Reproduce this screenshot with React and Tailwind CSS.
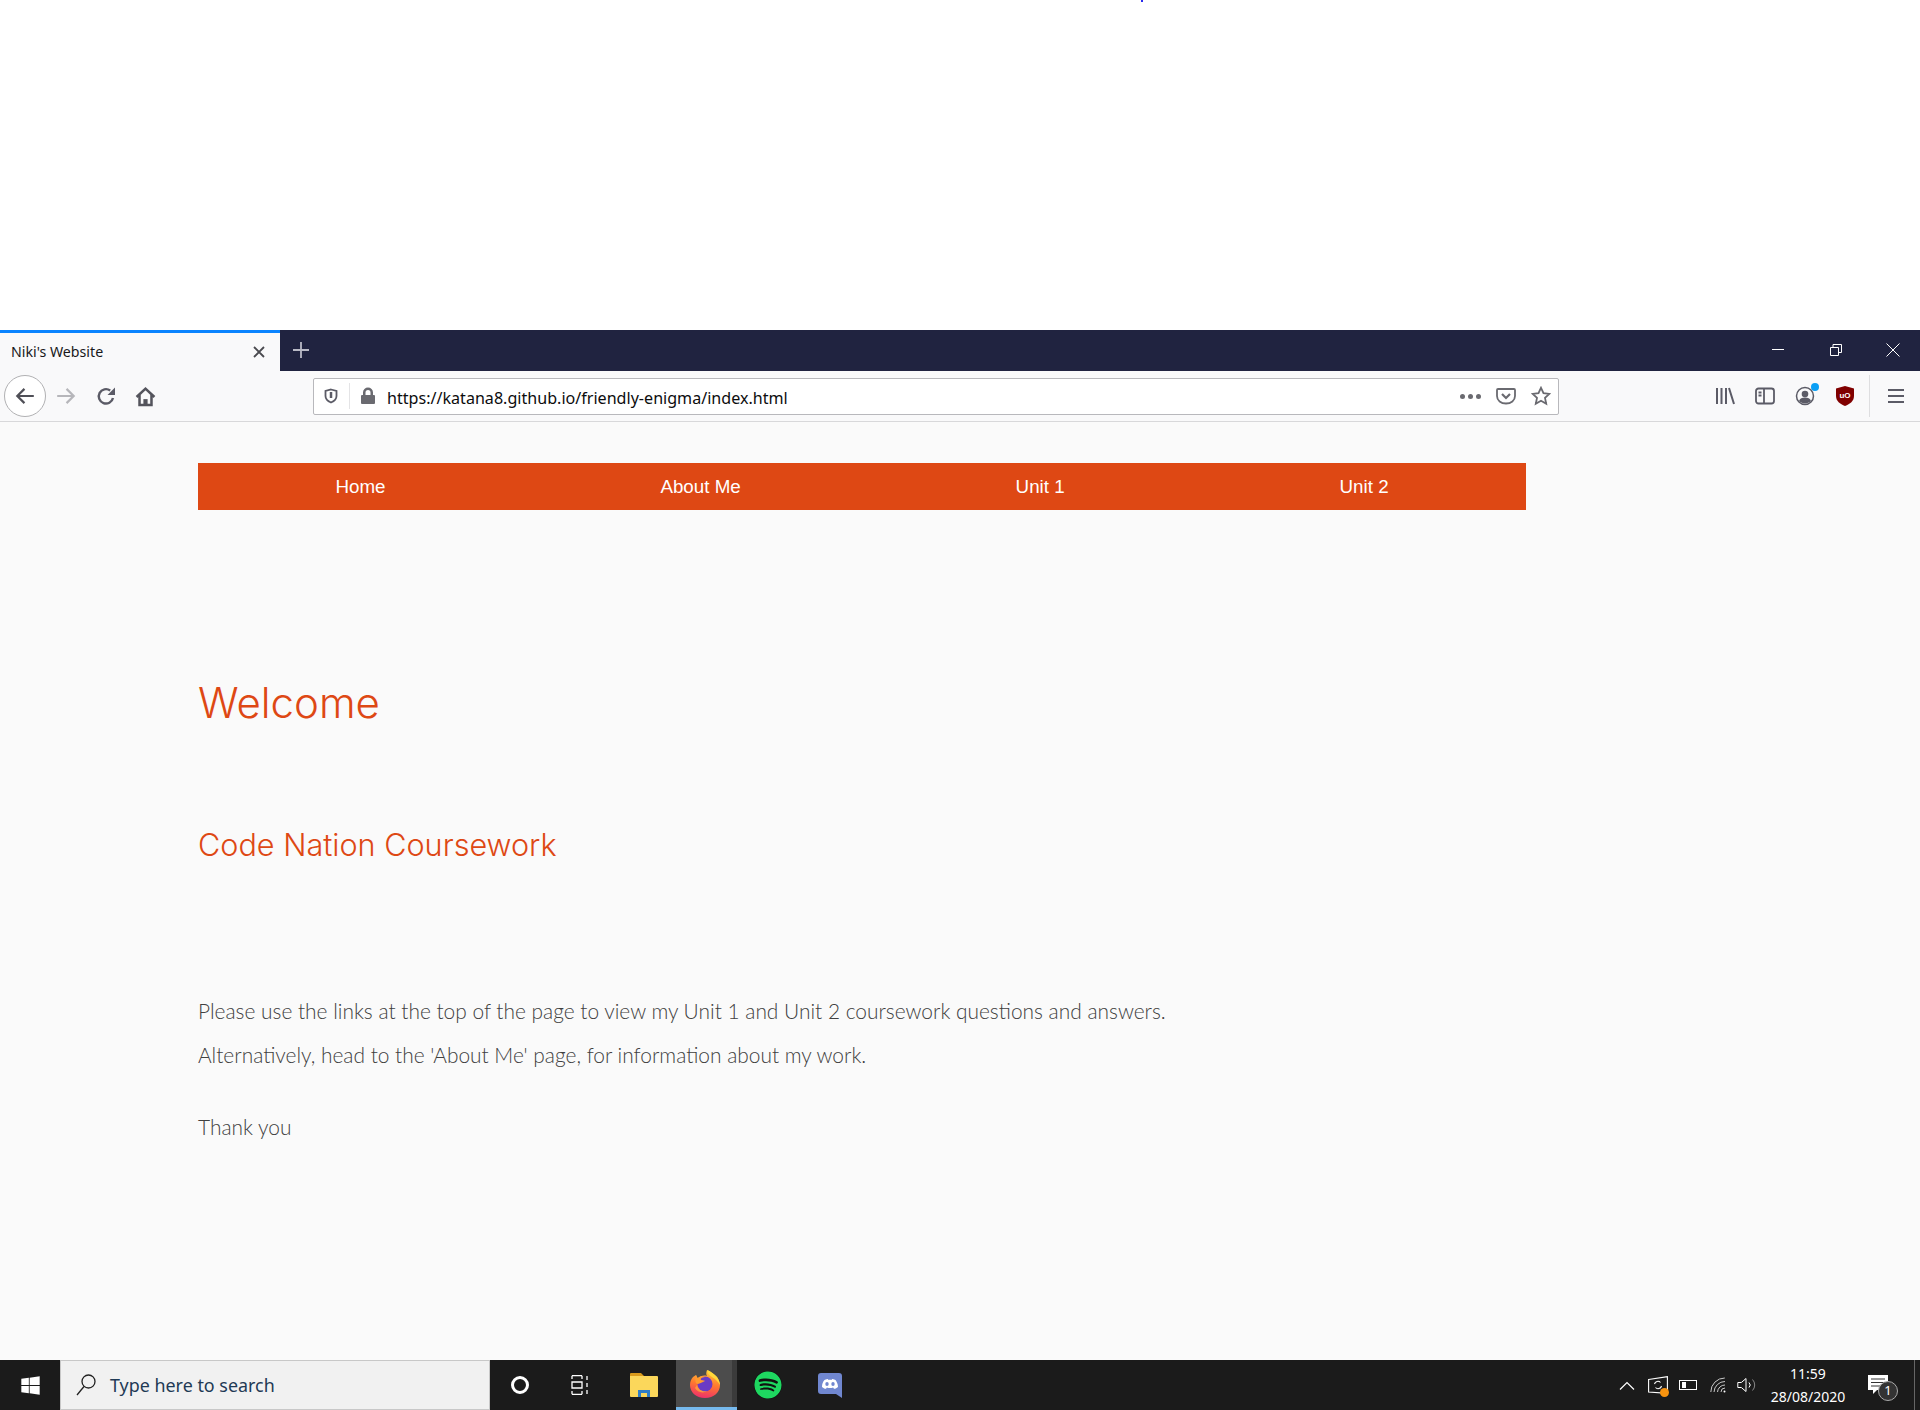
import { FaSpotify, FaWindows } from 'react-icons/fa'

const sans = "font-['Liberation_Sans',Arial,sans-serif]"

/* browser chrome glyphs, all on a 16 or 20 box */
function Glyph({ size = 16, box = 16, color = '#5b5b66', children, className = '' }) {
  return (
    <svg width={size} height={size} viewBox={`0 0 ${box} ${box}`} fill="none" stroke={color} strokeWidth="1.8" className={className}>
      {children}
    </svg>
  )
}

function Slot({ w, children }) {
  return <div className="flex h-full shrink-0 items-center justify-center" style={{ width: w }}>{children}</div>
}

function TabStrip() {
  return (
    <div className="flex h-[41px] bg-[#202340]">
      <div className="flex w-[280px] items-center border-t-[3px] border-[#0a84ff] bg-[#f9f9fa] pb-[1px] pl-[11px] pr-[14px]">
        <span className="flex-1 text-[14.2px] text-[#18181a] font-['Noto_Sans',sans-serif]">Niki's Website</span>
        <Glyph size={14} box={14} color="#4a4a4f"><path d="M2 2l10 10M12 2L2 12" /></Glyph>
      </div>
      <div className="flex w-[42px] items-center justify-center pb-[2px]">
        <Glyph size={18} box={18} color="#b9bac6"><path d="M9 1v16M1 9h16" /></Glyph>
      </div>
      <div className="flex-1" />
      <div className="flex w-[58px] items-center justify-center pb-[2px]"><div className="h-px w-3 bg-white" /></div>
      <div className="flex w-[58px] items-center justify-center pb-[2px]">
        <svg width="12" height="12" viewBox="0 0 12 12" fill="none" stroke="#fff"><path d="M.5 3.500h8v8h-8zM3 3.500v-3h8.500v8h-3" /></svg>
      </div>
      <div className="flex w-[55px] items-center justify-center pb-[2px]">
        <svg width="14" height="14" viewBox="0 0 14 14" fill="none" stroke="#fff"><path d="M.5.5l13 13M13.500.5l-13 13" /></svg>
      </div>
    </div>
  )
}

function UrlBar() {
  return (
    <div className="ml-[147px] flex h-[37px] w-[1246px] shrink-0 items-center rounded-[2px] border border-[#b8b8bc] bg-white">
      <div className="flex w-[33px] justify-center">
        <Glyph size={16} box={16} color="#5b5b66"><path d="M8 1.500l5.500 1.500v5c0 3-2.500 5.200-5.500 6.500C5 13.200 2.500 11 2.500 8V3z" /><path d="M8 4v6" strokeWidth="2.500" /></Glyph>
      </div>
      <div className="ml-[2px] h-[26px] w-px bg-[#e4e4e6]" />
      <div className="flex w-[35px] justify-center">
        <svg width="16" height="18" viewBox="0 0 16 18" fill="#6a6a70"><path d="M3 8V5.500a5 5 0 0110 0V8h1a1 1 0 011 1v7a1 1 0 01-1 1H2a1 1 0 01-1-1V9a1 1 0 011-1zm2.500 0h5V5.500a2.500 2.500 0 00-5 0z" /></svg>
      </div>
      <span className="ml-[2px] flex-1 pt-[4px] text-[16.1px] text-[#0c0c0d] font-['Noto_Sans',sans-serif]">https://katana8.github.io/friendly-enigma/index.html</span>
      <div className="flex gap-[3px]">
        <div className="size-[5px] rounded-full bg-[#6a6a70]" />
        <div className="size-[5px] rounded-full bg-[#6a6a70]" />
        <div className="size-[5px] rounded-full bg-[#6a6a70]" />
      </div>
      <div className="ml-[15px] flex w-[20px] justify-center">
        <Glyph size={20} box={20} color="#6a6a70"><path d="M2 3h16a1 1 0 011 1v6c0 4.500-4 7.500-9 7.500S1 14.500 1 10V4a1 1 0 011-1z" /><path d="M6 8l4 4 4-4" strokeWidth="2.200" /></Glyph>
      </div>
      <div className="ml-[15px] mr-[7px] flex w-[20px] justify-center">
        <Glyph size={20} box={20} color="#6a6a70"><path d="M10 1.800l2.500 5.400 5.800.7-4.300 4 1.200 5.800L10 14.800l-5.200 2.900L6 11.900l-4.300-4 5.800-.7z" /></Glyph>
      </div>
    </div>
  )
}

function Toolbar() {
  return (
    <div className="flex h-[51px] items-center border-b border-[#d8d8da] bg-[#f9f9fa]">
      <div className="ml-[4px] flex size-[42px] shrink-0 items-center justify-center rounded-full border border-[#b1b1b3] bg-white">
        <Glyph size={22} box={20} color="#4f4f57" ><path d="M18 10H3M9.500 3.500L3 10l6.500 6.500" strokeWidth="2" /></Glyph>
      </div>
      <Slot w={40}>
        <Glyph size={22} box={20} color="#b6b6ba"><path d="M2 10h15M10.500 3.500L17 10l-6.500 6.500" strokeWidth="2" /></Glyph>
      </Slot>
      <Slot w={40}>
        <Glyph size={20} box={20} color="#5b5b66"><path d="M17 12a7.200 7.200 0 11-2.800-7.500" strokeWidth="2.400" /><path d="M19 1.500V9h-7.500z" fill="#5b5b66" stroke="none" /></Glyph>
      </Slot>
      <Slot w={39}>
        <Glyph size={21} box={20} color="#54545c"><path d="M1.500 10.500L10 2.500l8.500 8M4.300 8.500V18h11.400V8.500" strokeWidth="2.400" /><path d="M8 18v-5.500h4V18z" fill="#54545c" stroke="none" /></Glyph>
      </Slot>
      <div className="w-px shrink-0" />
      <UrlBar />
      <div className="ml-[146px] flex h-full items-center">
        <Slot w={40}>
          <Glyph size={20} box={20} color="#5b5b66"><path d="M2 2v16M6.500 2v16M11 2v16M14 2l5 16" strokeWidth="2" /></Glyph>
        </Slot>
        <Slot w={40}>
          <Glyph size={20} box={20} color="#5b5b66"><rect x="1" y="2.500" width="18" height="15" rx="2.500" /><path d="M9 2.500v15M3.500 6.500h3M3.500 9.500h3" /></Glyph>
        </Slot>
        <Slot w={40}>
          <div className="relative">
            <Glyph size={20} box={20} color="#5b5b66" className="block"><circle cx="10" cy="10" r="8.500" strokeWidth="1.500" /><circle cx="10" cy="8" r="3.300" fill="#5b5b66" stroke="none" /><path d="M4 15c1-3 3-3.500 6-3.500s5 .5 6 3.500c-3 3.200-9 3.200-12 0z" fill="#5b5b66" stroke="none" /></Glyph>
            <div className="absolute -right-[4px] -top-[3px] size-[8px] rounded-full bg-[#0a9ff5]" />
          </div>
        </Slot>
        <Slot w={39}>
          <svg width="18" height="20" viewBox="0 0 18 20">
            <path d="M9 0l9 2.500V10c0 5-4 8-9 10-5-2-9-5-9-10V2.500z" fill="#800000" />
            <text x="9" y="11.500" textAnchor="middle" fontSize="8" fontWeight="700" fill="#fff" fontFamily="Liberation Sans, sans-serif">uO</text>
          </svg>
        </Slot>
        <div className="ml-[5px] h-[42px] w-px bg-[#dedee0]" />
        <Slot w={50}>
          <div className="pl-[2px]">
            <Glyph size={16} box={16} color="#5b5b66" className="block"><path d="M0 2h16M0 8h16M0 14h16" strokeWidth="2" /></Glyph>
          </div>
        </Slot>
      </div>
    </div>
  )
}

function FirefoxLogo() {
  return (
    <svg width="30" height="28" viewBox="0 0 30 28">
      <defs>
        <linearGradient id="ffOuter" x1="0.600" y1="0" x2="0.400" y2="1">
          <stop offset="0" stopColor="#ffc83c" />
          <stop offset="0.500" stopColor="#ff7a2e" />
          <stop offset="1" stopColor="#ee2f6b" />
        </linearGradient>
      </defs>
      <path d="M17 0c4 2 7 4 10 7 2 3 3 6 3 8 0 7-6 13-15 13C6 28 0 22 0 15c0-3 1-6 3-8l3-2c1 2 1 3 2 3 2-2 6-3 9-2-1-2-1-3 0-6z" fill="url(#ffOuter)" />
      <path d="M17.500 0c4 2 7 4 9.500 7 2 3 3 6 3 8-2-3-4-6-8-8-3-2-5-4-4.500-7z" fill="#ffd83a" />
      <circle cx="15" cy="14" r="7.500" fill="#6a3bc4" />
      <path d="M6 5c1 2 1 3 2 3 2-2 5-2 8-1-3 0-6 1-5 3 2 0 4 1 4 1-2 1-4 2-7 3-3 0-3-4-2-9z" fill="#ff9a2e" />
      <path d="M7 15c1 5 6 7 10 6-4 3-10 1-12-3z" fill="#ffb03a" opacity=".7" />
    </svg>
  )
}

function DiscordLogo() {
  return (
    <svg width="24" height="25" viewBox="0 0 24 25">
      <path d="M3 0h18a3 3 0 013 3v22l-6-4H3a3 3 0 01-3-3V3a3 3 0 013-3z" fill="#7087d0" />
      <path d="M4 14c0-3 1-5.500 2.500-7 1.800-1 2.800-1 3.300-1l.3.700h3.800l.3-.7c.5 0 1.500 0 3.300 1C18.500 8.500 20 11 20 14c-1.500 1.300-3 1.800-4 1.800l-.9-1.300c-2 .7-4.200.7-6.200 0L8 15.800c-1 0-2.500-.5-4-1.800z" fill="#fff" />
      <ellipse cx="9" cy="11" rx="1.700" ry="1.900" fill="#7087d0" />
      <ellipse cx="15" cy="11" rx="1.700" ry="1.900" fill="#7087d0" />
    </svg>
  )
}

function Taskbar() {
  return (
    <div className="flex h-[50px] items-center bg-[#1b1b1b]">
      <div className="flex w-[60px] justify-center"><FaWindows size={21} color="#fff" /></div>
      <div className="flex h-full w-[430px] items-center border border-[#c8c8c8] bg-[#f1f1f1] pl-[14px]">
        <svg width="22" height="24" viewBox="0 0 22 24" fill="none" stroke="#222" strokeWidth="1.300"><circle cx="13.500" cy="8.500" r="6.500" /><path d="M9 13.500L2 22" /></svg>
        <span className="ml-[13px] text-[17.9px] text-[#1f3a55] font-['Noto_Sans',sans-serif]">Type here to search</span>
      </div>
      <Slot w={60}><div className="size-[18px] rounded-full border-[3px] border-white" /></Slot>
      <Slot w={61}>
        <svg width="20" height="20" viewBox="0 0 20 20" fill="none" stroke="#fff" strokeWidth="1.300">
          <path d="M1 .7h10M1 19.300h10M1 4V.7M11 4V.7M1 16v3.300M11 16v3.300M1 7h10v6H1zM16 1v4M16 8v4M16 15v4" />
        </svg>
      </Slot>
      <Slot w={65}>
        <svg width="28" height="24" viewBox="0 0 28 24">
          <path d="M0 1a1 1 0 011-1h10l3 3h-14z" fill="#d99a1c" />
          <path d="M0 3h27a1 1 0 011 1v19a1 1 0 01-1 1H1a1 1 0 01-1-1z" fill="#fbd75b" />
          <path d="M8 24v-7h12v7h-3v-4h-6v4z" fill="#2f7dc6" />
        </svg>
      </Slot>
      <div className="flex h-full w-[61px] flex-col">
        <div className="flex flex-1">
          <div className="flex flex-1 items-center justify-center bg-[#4c4c4c] pl-[2px] pt-[1px]"><FirefoxLogo /></div>
          <div className="w-[5px] bg-[#3b3b3b]" />
        </div>
        <div className="h-[3px] bg-[#76b9ed]" />
      </div>
      <Slot w={62}><FaSpotify size={28} color="#1ed760" className="rounded-full bg-[#111]" /></Slot>
      <Slot w={62}><DiscordLogo /></Slot>
      <div className="flex-1" />
      <Slot w={32}>
        <svg width="16" height="9" viewBox="0 0 16 9" fill="none" stroke="#fff" strokeWidth="1.200"><path d="M1 8.500l7-7 7 7" /></svg>
      </Slot>
      <Slot w={30}>
        <div className="relative">
          <svg width="20" height="18" viewBox="0 0 20 18" fill="none" stroke="#fff" strokeWidth="1.100" className="block"><path d="M.6 3.500L19.400.6v16.800L.6 16zM6.500 8a3.500 3.500 0 016-1.500M13.500 10a3.500 3.500 0 01-6 1.500" /></svg>
          <div className="absolute -bottom-[3px] -right-[1px] size-[9px] rounded-full bg-[#f7930f]" />
        </div>
      </Slot>
      <Slot w={30}>
        <div className="flex h-[10px] w-[18px] items-center border border-white pl-[2px]"><div className="h-[6px] w-[4px] bg-white" /></div>
      </Slot>
      <Slot w={31}>
        <svg width="18" height="16" viewBox="0 0 18 16" fill="none" stroke="#c9c9c9" strokeWidth="1"><path d="M.8 15a14 14 0 0114-14M4 15A11 11 0 0115 4.500M7.500 15a7.500 7.500 0 017.500-7M11 15a4 4 0 014-4" /><circle cx="14.500" cy="14.500" r="1" fill="#fff" stroke="none" /></svg>
      </Slot>
      <Slot w={26}>
        <svg width="20" height="16" viewBox="0 0 20 16" fill="none" stroke="#fff" strokeWidth="1"><path d="M.8 5.500h3.500L9 1.500v13l-4.700-4H.8zM12 5.500a3.500 3.500 0 010 5" /><path d="M15.500 2.500a8 8 0 010 11" stroke="#888" /></svg>
      </Slot>
      <div className="w-[96px] text-center text-[14px] leading-[23px] text-white font-['Noto_Sans',sans-serif]">
        <div>11:59</div>
        <div>28/08/2020</div>
      </div>
      <Slot w={44}>
        <div className="relative">
          <svg width="20" height="20" viewBox="0 0 20 20" className="block"><path d="M0 0h20v15H9l-4 4v-4H0z" fill="#fff" /><path d="M3 4h14M3 7.500h14M3 11h9" stroke="#333" strokeWidth="1.100" /></svg>
          <div className="absolute -bottom-[6px] -right-[10px] flex size-[20px] items-center justify-center rounded-full border border-[#aaa] bg-[#333] text-[13px] text-white font-['Noto_Sans',sans-serif]">1</div>
        </div>
      </Slot>
      <div className="ml-[14px] h-full w-px bg-[#666]" />
      <div className="w-[5px]" />
    </div>
  )
}

export default function App() {
  const links = ['Home', 'About Me', 'Unit 1', 'Unit 2']
  return (
    <div className="flex h-[1410px] flex-col overflow-hidden bg-white">
      <div className="h-[330px]">
        <div className="ml-[1141px] h-[2px] w-[2px] bg-[#2a2aee]" />
      </div>
      <TabStrip />
      <Toolbar />
      <main className="flex-1 bg-[#fafafa] pl-[198px] pt-[41px]">
        <nav className={`flex h-[47px] w-[1328px] items-center justify-around bg-[#de4814] pt-[1px] text-[18.8px] text-white ${sans}`}>
          {links.map(l => <a key={l}>{l}</a>)}
        </nav>
        <h1 className="mt-[163px] text-[42px] leading-[60px] font-light text-[#de4814] font-['Inter',sans-serif]">Welcome</h1>
        <h2 className="mt-[92px] text-[30.6px] leading-[40px] font-light text-[#de4814] font-['Inter',sans-serif]">Code Nation Coursework</h2>
        <div className="mt-[132px] text-[20.9px] leading-[28px] font-light text-[#404040] font-['Lato',sans-serif]">
          <p>Please use the links at the top of the page to view my Unit 1 and Unit 2 coursework questions and answers.</p>
          <p className="mt-[16px]">Alternatively, head to the 'About Me' page, for information about my work.</p>
          <p className="mt-[44px]">Thank you</p>
        </div>
      </main>
      <Taskbar />
    </div>
  )
}
